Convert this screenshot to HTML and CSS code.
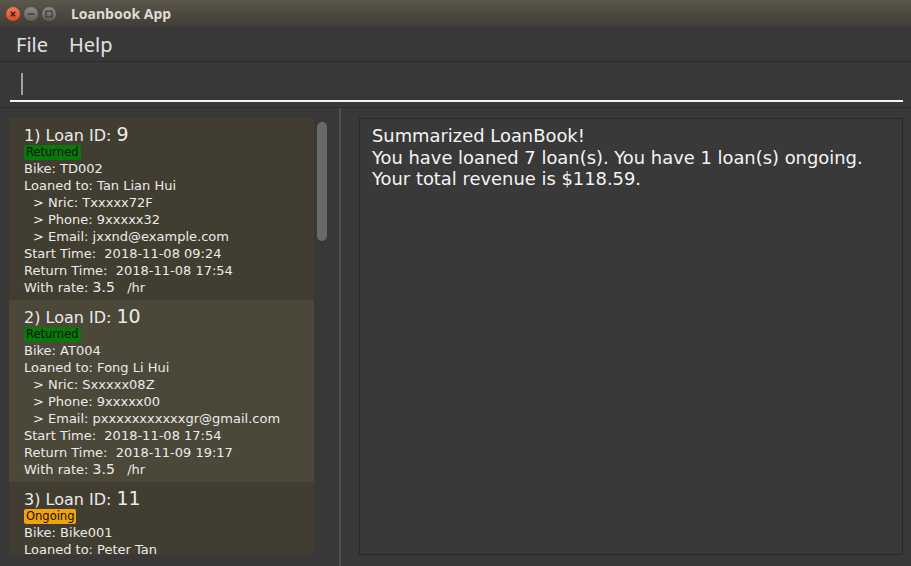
FILE: index.html
```html
<!DOCTYPE html>
<html>
<head>
<meta charset="utf-8">
<link rel="stylesheet" href="styles.css">
</head>
<body>
<div class="window">
  <div class="titlebar">
    <div class="wbtns">
      <span class="wbtn close"><svg width="14" height="14" viewBox="0 0 14 14"><path d="M4.8 4.8 L9.2 9.2 M9.2 4.8 L4.8 9.2" stroke="#3a1a10" stroke-width="1.4"/></svg></span>
      <span class="wbtn"><svg width="14" height="14" viewBox="0 0 14 14"><path d="M3.5 7 H10.5" stroke="#3a3a3a" stroke-width="1.3"/></svg></span>
      <span class="wbtn"><svg width="14" height="14" viewBox="0 0 14 14"><rect x="4" y="4" width="6" height="6" fill="none" stroke="#3a3a3a" stroke-width="1.2"/></svg></span>
    </div>
    <div class="title">Loanbook App</div>
  </div>
  <div class="menubar">
    <span class="menu">File</span>
    <span class="menu">Help</span>
  </div>
  <div class="command">
    <div class="cmdfield"><span class="caret"></span></div>
  </div>
  <div class="main">
    <div class="left">
      <div class="list">
        <div class="card">
          <div class="head">1) Loan ID: <span class="id">9</span></div>
          <div><span class="badge returned">Returned</span></div>
          <div class="line">Bike: TD002</div>
          <div class="line">Loaned to: Tan Lian Hui</div>
          <div class="line sub">&gt; Nric: Txxxxx72F</div>
          <div class="line sub">&gt; Phone: 9xxxxx32</div>
          <div class="line sub">&gt; Email: jxxnd@example.com</div>
          <div class="line">Start Time:&nbsp; 2018-11-08 09:24</div>
          <div class="line">Return Time:&nbsp; 2018-11-08 17:54</div>
          <div class="line">With rate: <span class="val">3.5</span>&nbsp;&nbsp; /hr</div>
        </div>
        <div class="card alt">
          <div class="head">2) Loan ID: <span class="id">10</span></div>
          <div><span class="badge returned">Returned</span></div>
          <div class="line">Bike: AT004</div>
          <div class="line">Loaned to: Fong Li Hui</div>
          <div class="line sub">&gt; Nric: Sxxxxx08Z</div>
          <div class="line sub">&gt; Phone: 9xxxxx00</div>
          <div class="line sub">&gt; Email: pxxxxxxxxxxxgr@gmail.com</div>
          <div class="line">Start Time:&nbsp; 2018-11-08 17:54</div>
          <div class="line">Return Time:&nbsp; 2018-11-09 19:17</div>
          <div class="line">With rate: <span class="val">3.5</span>&nbsp;&nbsp; /hr</div>
        </div>
        <div class="card">
          <div class="head">3) Loan ID: <span class="id">11</span></div>
          <div><span class="badge ongoing">Ongoing</span></div>
          <div class="line">Bike: Bike001</div>
          <div class="line">Loaned to: Peter Tan</div>
        </div>
      </div>
      <div class="scroll"><div class="thumb"></div></div>
    </div>
    <div class="divider"></div>
    <div class="right">
      <div class="result">Summarized LoanBook!<br>You have loaned 7 loan(s). You have 1 loan(s) ongoing.<br>Your total revenue is $118.59.</div>
    </div>
  </div>
</div>
</body>
</html>
```
FILE: styles.css
```css
* { box-sizing: border-box; }
html, body { margin: 0; padding: 0; }
body {
  width: 911px; height: 566px; overflow: hidden;
  background: #383838;
  font-family: "DejaVu Sans", sans-serif;
}
.window { display: flex; flex-direction: column; height: 566px; }
.titlebar {
  height: 27px; flex: none;
  background: linear-gradient(#5b574c, #3f3c36);
  display: flex; align-items: center;
}
.wbtns { display: flex; gap: 4px; padding-left: 6px; width: 71px; }
.wbtn {
  width: 14px; height: 14px; border-radius: 50%;
  background: linear-gradient(#8a8a86, #5e5e5a);
  display: flex;
}
.wbtn.close { background: linear-gradient(#f37a52, #dd4a1e); }
.title { color: #dfdbd2; font-weight: bold; font-size: 14px; font-family: "Noto Sans", sans-serif; }
.menubar {
  height: 35px; flex: none;
  border-bottom: 1px solid #2b2b2b;
  display: flex; align-items: center; gap: 21px; padding-left: 16px;
}
.menu { color: #e2e2e2; font-size: 20px; font-family: "Noto Sans", sans-serif; }
.command { height: 46px; flex: none; padding: 0 8px 0 10px; border-bottom: 1px solid #2e2e2e; }
.cmdfield { height: 40px; border-bottom: 2px solid #f4f4f4; padding: 11px 0 0 11px; }
.caret { display: block; width: 2px; height: 22px; background: #a0a0a0; }
.main { flex: 1 1 0; min-height: 0; display: flex; overflow: hidden; }
.left { width: 339px; flex: none; display: flex; padding: 10px 0 11px 9px; }
.list { width: 305px; background: #403c30; overflow: hidden; }
.card { background: #413d30; padding: 4px 0 4px 15px; color: #ebebeb; font-size: 13px; }
.card.alt { background: #4b4739; }
.head { height: 22px; font-size: 16px; line-height: 24px; }
.id { font-size: 19px; }
.badge {
  display: inline-block; height: 15px; line-height: 15px;
  font-size: 11.5px; color: #111; padding: 0 2px; border-radius: 2px;
}
.returned { background: #077a07; }
.ongoing { background: #f2a20c; }
.line { height: 17px; line-height: 17px; white-space: nowrap; }
.sub { padding-left: 9px; }
.val { font-size: 14px; }
.scroll { width: 25px; padding: 4px 0 0 3px; }
.thumb { width: 10px; height: 119px; background: #696969; border-radius: 5px; }
.divider { width: 2px; background: #505050; flex: none; }
.right { flex: 1; padding: 10px 8px 11px 18px; }
.result {
  height: 100%; border: 1px solid #282828; background: #393939;
  color: #f4f4f4; font-size: 17.9px; line-height: 21.5px;
  padding: 6px 12px;
}
```
